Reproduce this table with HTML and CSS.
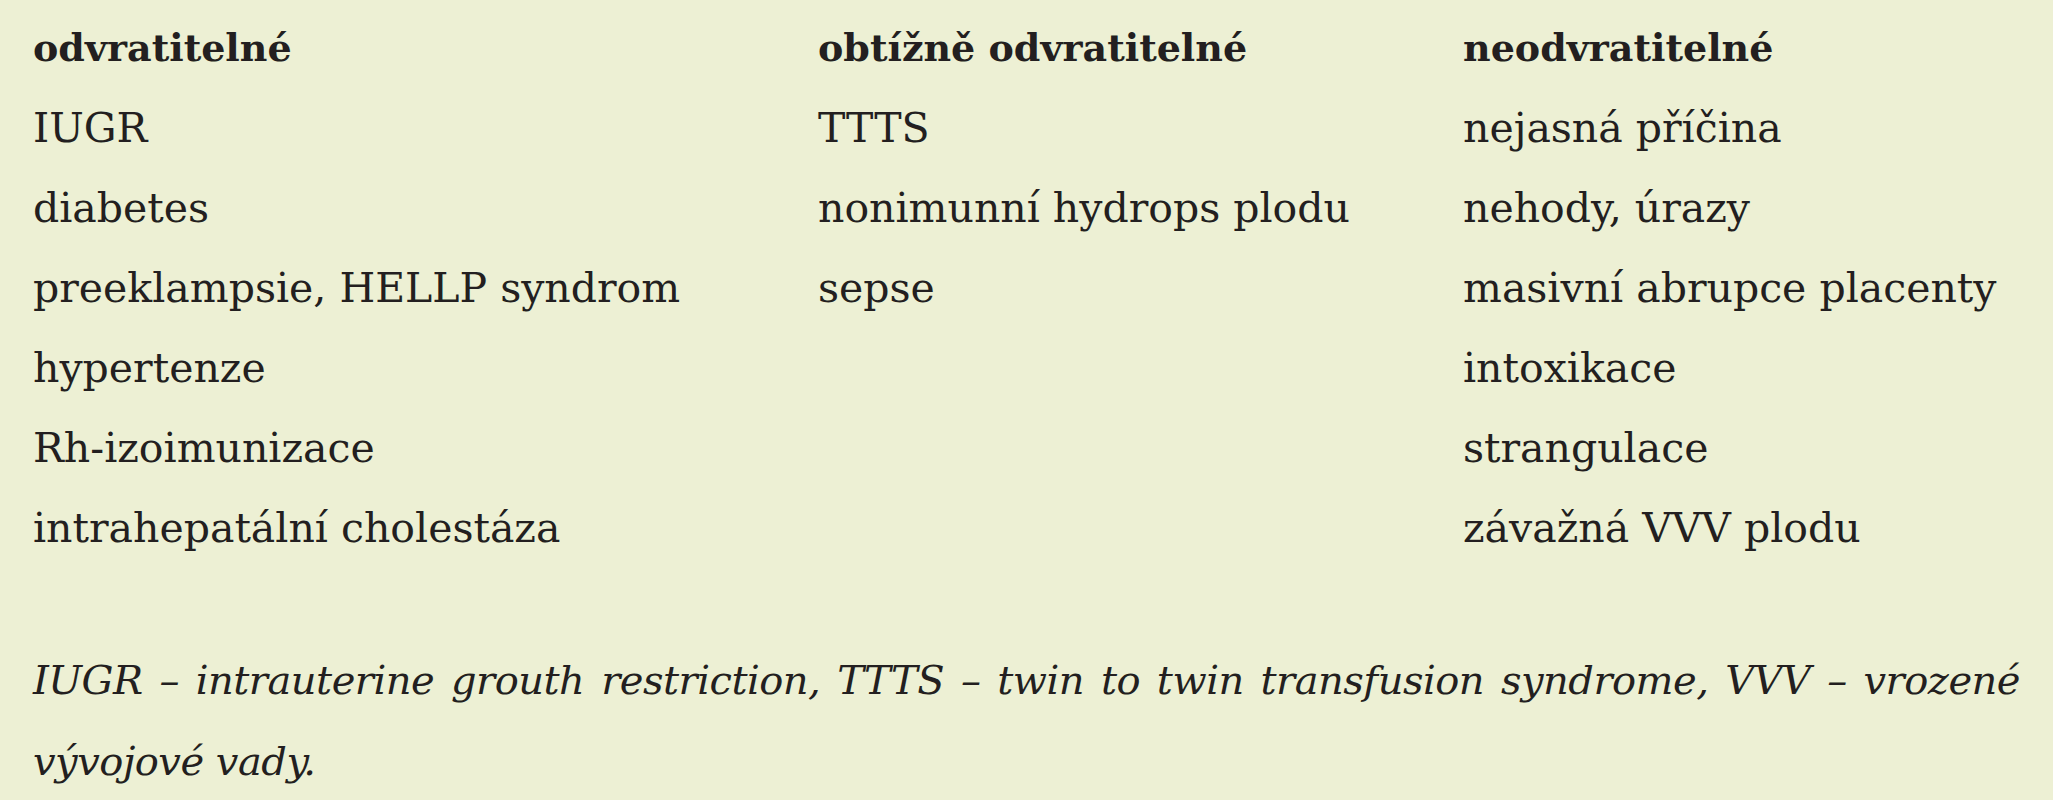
FILE: index.html
```html
<!DOCTYPE html>
<html lang="cs">
<head>
<meta charset="utf-8">
<link rel="stylesheet" href="styles.css">
</head>
<body>
<div class="panel">
  <div class="grid">
    <div class="col c1">
      <div class="cell head">odvratitelné</div>
      <div class="cell">IUGR</div>
      <div class="cell">diabetes</div>
      <div class="cell">preeklampsie, HELLP syndrom</div>
      <div class="cell">hypertenze</div>
      <div class="cell">Rh-izoimunizace</div>
      <div class="cell">intrahepatální cholestáza</div>
    </div>
    <div class="col c2">
      <div class="cell head">obtížně odvratitelné</div>
      <div class="cell">TTTS</div>
      <div class="cell">nonimunní hydrops plodu</div>
      <div class="cell">sepse</div>
    </div>
    <div class="col c3">
      <div class="cell head">neodvratitelné</div>
      <div class="cell">nejasná příčina</div>
      <div class="cell">nehody, úrazy</div>
      <div class="cell">masivní abrupce placenty</div>
      <div class="cell">intoxikace</div>
      <div class="cell">strangulace</div>
      <div class="cell">závažná VVV plodu</div>
    </div>
  </div>
  <p class="note">IUGR – intrauterine grouth restriction, TTTS – twin to twin transfusion syndrome, VVV – vrozené vývojové vady.</p>
</div>
</body>
</html>
```
FILE: styles.css
```css
html, body {
  margin: 0;
  padding: 0;
  background: #edf0d4;
}
body {
  width: 2053px;
  height: 800px;
  overflow: hidden;
  font-family: "DejaVu Serif", "Liberation Serif", serif;
  color: #231f20;
}
.panel {
  padding: 8px 33px 0 33px;
}
.grid {
  display: grid;
  grid-template-columns: 785px 645px 1fr;
}
.cell {
  font-size: 41px;
  line-height: 80px;
  white-space: nowrap;
}
.head {
  font-size: 38px;
  font-weight: bold;
}
.note {
  margin: 72px 0 0 0;
  font-size: 40px;
  letter-spacing: -0.5px;
  line-height: 81px;
  font-style: italic;
  text-align: justify;
}
```
